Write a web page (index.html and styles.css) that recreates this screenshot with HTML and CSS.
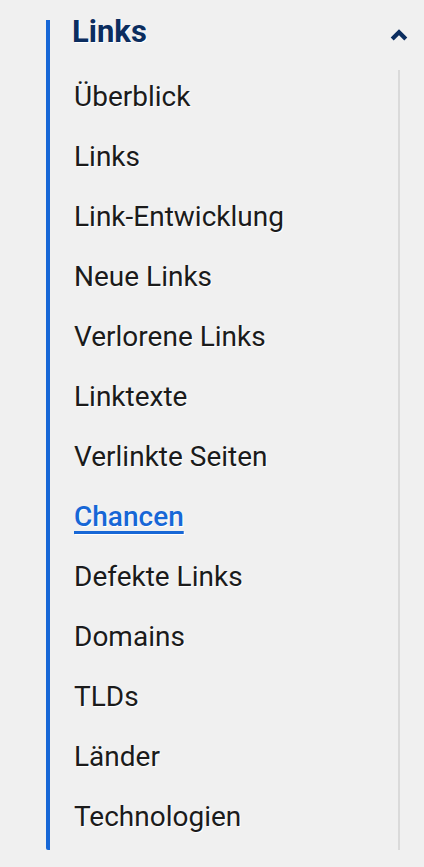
FILE: index.html
```html
<!DOCTYPE html>
<html lang="de">
<head>
<meta charset="utf-8">
<title>Links</title>
<link rel="stylesheet" href="styles.css">
</head>
<body>
<nav class="sidenav">
  <div class="sidenav-head">
    <span class="sidenav-title">Links</span>
    <svg class="chevron" width="18" height="12" viewBox="0 0 18 12" aria-hidden="true">
      <polyline points="2.2,10 9,3.2 15.8,10" fill="none" stroke="#0b2d5f" stroke-width="4.2" stroke-linejoin="miter" stroke-linecap="butt"/>
    </svg>
  </div>
  <ul class="sidenav-list">
    <li class="sidenav-item">Überblick</li>
    <li class="sidenav-item">Links</li>
    <li class="sidenav-item">Link-Entwicklung</li>
    <li class="sidenav-item">Neue Links</li>
    <li class="sidenav-item">Verlorene Links</li>
    <li class="sidenav-item">Linktexte</li>
    <li class="sidenav-item">Verlinkte Seiten</li>
    <li class="sidenav-item is-active"><span class="active-label">Chancen</span></li>
    <li class="sidenav-item">Defekte Links</li>
    <li class="sidenav-item">Domains</li>
    <li class="sidenav-item">TLDs</li>
    <li class="sidenav-item">Länder</li>
    <li class="sidenav-item">Technologien</li>
  </ul>
</nav>
</body>
</html>
```
FILE: styles.css
```css
html, body {
  margin: 0;
  padding: 0;
  background: #f0f0f0;
}
body {
  font-family: Roboto, "Liberation Sans", sans-serif;
  min-height: 867px;
}
.sidenav {
  margin: 20px 16px 0 46px;
  border-left: 4px solid #1767d6;
  border-bottom-left-radius: 2px;
}
.sidenav-head {
  display: flex;
  justify-content: space-between;
  align-items: flex-start;
  height: 50px;
  padding-left: 22px;
}
.sidenav-title {
  font-size: 31px;
  font-weight: 700;
  line-height: 24px;
  color: #0b2d5f;
  text-shadow: 1px 1px 0 #fff;
}
.chevron {
  display: block;
  margin-top: 9px;
}
.sidenav-list {
  list-style: none;
  margin: 0 8px 0 0;
  padding: 0 0 0 24px;
  border-right: 2px solid #dadada;
}
.sidenav-item {
  height: 60px;
  box-sizing: border-box;
  padding-bottom: 6px;
  font-size: 28px;
  line-height: 54px;
  color: #1b1b1b;
  text-shadow: 1px 1px 0 #fff;
  white-space: nowrap;
}
.active-label {
  color: #1767d6;
  font-weight: 500;
  text-decoration: underline;
  text-decoration-thickness: 3px;
  text-underline-offset: 5px;
}
```
